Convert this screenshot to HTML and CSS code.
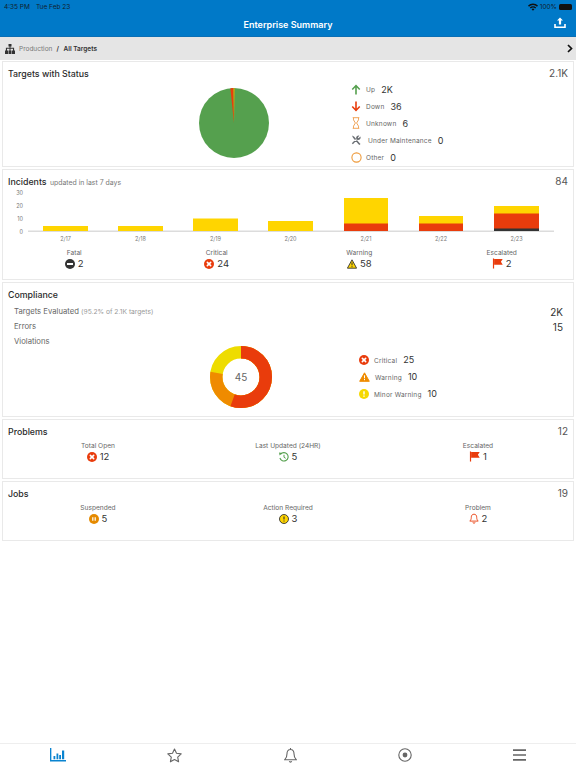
FILE: index.html
```html
<!DOCTYPE html>
<html lang="en">
<head>
    <meta charset="UTF-8">
    <title>Enterprise Summary</title>
    <link rel="stylesheet" href="styles.css">
</head>
<body>
    <svg class="sprites" width="0" height="0">
        <symbol id="i-critical" viewBox="0 0 12 12">
            <circle cx="6" cy="6" r="6" fill="#e93c0c"/>
            <path d="M4 4l4 4M8 4l-4 4" stroke="#fff" stroke-width="1.9" stroke-linecap="round"/>
        </symbol>
        <symbol id="i-flag" viewBox="0 0 12 12">
            <path d="M1 0.5h1.3v11H1z" fill="#e93c0c"/>
            <path d="M2.3 1h9.4l-2 3 2 3.4H2.3z" fill="#e93c0c"/>
        </symbol>
    </svg>

    <header class="app-header">
        <div class="status-bar">
            <span class="status-time">4:35 PM<span class="status-date">Tue Feb 23</span></span>
            <span class="status-right">
                <svg width="10" height="8" viewBox="0 0 10 8"><path d="M0 2.6a7.2 7.2 0 0 1 10 0L9 3.7a5.7 5.7 0 0 0-8 0zM1.8 4.5a4.6 4.6 0 0 1 6.4 0L7.2 5.5a3.2 3.2 0 0 0-4.4 0zM3.6 6.3a2 2 0 0 1 2.8 0L5 7.8z" fill="#111"/></svg>
                100%
                <span class="battery"></span>
            </span>
        </div>
        <div class="title-bar">
            <h1>Enterprise Summary</h1>
            <svg class="upload" width="12" height="12" viewBox="0 0 12 12"><path d="M6 0.5L9 3.6H7.1V7.6H4.9V3.6H3z" fill="#fff"/><path d="M1 7v3.2h10V7" fill="none" stroke="#fff" stroke-width="1.6"/></svg>
        </div>
    </header>

    <nav class="crumbs">
        <svg width="12" height="10" viewBox="0 0 12 10"><path d="M4.5 0h3v2.6h-1v1.2h3.6v2.6H11V10H8V6.4h1V4.8H6.5v1.6h1V10h-3V6.4h1V4.8H3v1.6h1V10H1V6.4h.9V3.8h3.6V2.6h-1z" fill="#333"/></svg>
        <span class="crumb-parent">Production</span>
        <span class="crumb-current">/ <span class="crumb-name">All Targets</span></span>
        <svg class="crumb-arrow" width="6" height="9" viewBox="0 0 6 9"><path d="M1 1l3.5 3.5L1 8" fill="none" stroke="#111" stroke-width="1.7"/></svg>
    </nav>

    <main class="cards">
        <section class="card card-status">
            <div class="card-head">
                <h2>Targets with Status</h2>
                <span class="total">2.1K</span>
            </div>
            <div class="chart-row">
                <div class="pie-wrap">
                    <svg width="70" height="70" viewBox="-35.5 -35.5 71 71">
                        <circle r="35.5" fill="#55a04e"/>
                        <path d="M0 0L-3.7 -35.3A35.5 35.5 0 0 1 -0.6 -35.5z" fill="#e93c0c"/>
                        <path d="M0 0L-0.6 -35.5A35.5 35.5 0 0 1 0.6 -35.5z" fill="#e0a800"/>
                    </svg>
                </div>
                <ul class="legend">
                    <li><span class="legend-icon"><svg width="10" height="11" viewBox="0 0 10 11"><path d="M5 0.5L9.3 5 8.2 6 5.8 3.6V10.5H4.2V3.6L1.8 6 .7 5z" fill="#55a04e"/></svg></span><span class="legend-label">Up</span><b>2K</b></li>
                    <li><span class="legend-icon"><svg width="10" height="11" viewBox="0 0 10 11"><path d="M5 10.5L9.3 6 8.2 5 5.8 7.4V.5H4.2V7.4L1.8 5 .7 6z" fill="#e93c0c"/></svg></span><span class="legend-label">Down</span><b>36</b></li>
                    <li><span class="legend-icon"><svg width="8" height="12" viewBox="0 0 8 12"><path d="M.7.7h6.6M.7 11.3h6.6M1.5.7v2.2L3.4 6 1.5 9.1v2.2M6.5.7v2.2L4.6 6l1.9 3.1v2.2" fill="none" stroke="#f0a55a" stroke-width="1"/></svg></span><span class="legend-label">Unknown</span><b>6</b></li>
                    <li><span class="legend-icon"><svg width="10" height="10" viewBox="0 0 10 10"><path d="M1 0.5l2 1 5.5 6.5 1 1-1.2 1-1-1L2 2.8zM9.3 1.5L7.6 3.2 6.8 2.4 8.4.7A2.4 2.4 0 0 0 5.3 3.8L.8 8.2 1.9 9.3 6.2 4.8A2.4 2.4 0 0 0 9.3 1.5z" fill="#6b6f74"/></svg></span><span class="legend-label legend-wide">Under Maintenance</span><b>0</b></li>
                    <li><span class="legend-icon"><svg width="11" height="11" viewBox="0 0 11 11"><circle cx="5.5" cy="5.5" r="4.6" fill="none" stroke="#ee9a3a" stroke-width="1.1"/></svg></span><span class="legend-label">Other</span><b>0</b></li>
                </ul>
            </div>
        </section>

        <section class="card card-incidents">
            <div class="card-head">
                <h2>Incidents <small>updated in last 7 days</small></h2>
                <span class="total">84</span>
            </div>
            <svg class="bars" width="570" height="56" viewBox="0 0 570 56">
                <g class="axis-y">
                    <text x="20" y="9">30</text>
                    <text x="20" y="22">20</text>
                    <text x="20" y="34.5">10</text>
                    <text x="20" y="47.5">0</text>
                </g>
                <rect x="25" y="44.5" width="526" height="1.5" fill="#dcdcdc"/>
                <g fill="#ffd500">
                    <rect x="40" y="40" width="45" height="5"/>
                    <rect x="115" y="40" width="45" height="5"/>
                    <rect x="190" y="32.5" width="45" height="12.5"/>
                    <rect x="265" y="35" width="45" height="10"/>
                    <rect x="341" y="12" width="44" height="33"/>
                    <rect x="416" y="30" width="44" height="15"/>
                    <rect x="491" y="20" width="45" height="25"/>
                </g>
                <g fill="#e93c0c">
                    <rect x="341" y="37.5" width="44" height="7.5"/>
                    <rect x="416" y="37.5" width="44" height="7.5"/>
                    <rect x="491" y="27.5" width="45" height="17.5"/>
                </g>
                <rect x="491" y="42.5" width="45" height="2.5" fill="#333"/>
                <g class="axis-x">
                    <text x="62.5" y="55">2/17</text>
                    <text x="137.5" y="55">2/18</text>
                    <text x="212.5" y="55">2/19</text>
                    <text x="287.5" y="55">2/20</text>
                    <text x="363" y="55">2/21</text>
                    <text x="438" y="55">2/22</text>
                    <text x="513.5" y="55">2/23</text>
                </g>
            </svg>
            <div class="stats stats-four">
                <div class="stat">
                    <span class="stat-label">Fatal</span>
                    <span class="stat-value"><svg width="10" height="10" viewBox="0 0 10 10"><circle cx="5" cy="5" r="5" fill="#333"/><rect x="2" y="4" width="6" height="2" fill="#fff"/></svg>2</span>
                </div>
                <div class="stat">
                    <span class="stat-label">Critical</span>
                    <span class="stat-value"><svg width="10" height="10"><use href="#i-critical"/></svg>24</span>
                </div>
                <div class="stat">
                    <span class="stat-label">Warning</span>
                    <span class="stat-value"><svg width="10" height="10" viewBox="0 0 10 10"><path d="M5 .8L9.6 9.2H.4z" fill="#ffd500" stroke="#333" stroke-width=".9" stroke-linejoin="round"/><path d="M5 3.4v3M5 7.2v1" stroke="#333" stroke-width="1"/></svg>58</span>
                </div>
                <div class="stat">
                    <span class="stat-label">Escalated</span>
                    <span class="stat-value"><svg width="11" height="11"><use href="#i-flag"/></svg>2</span>
                </div>
            </div>
        </section>

        <section class="card card-compliance">
            <div class="card-head">
                <h2>Compliance</h2>
            </div>
            <div class="metric"><span>Targets Evaluated <small>(95.2% of 2.1K targets)</small></span><b>2K</b></div>
            <div class="metric"><span>Errors</span><b>15</b></div>
            <div class="metric"><span>Violations</span></div>
            <div class="chart-row chart-row-donut">
                <div class="donut-wrap">
                    <svg width="62" height="62" viewBox="0 0 62 62">
                        <g fill="none" stroke-width="12.5" transform="rotate(-90 31 31)">
                            <circle cx="31" cy="31" r="24.75" pathLength="45" stroke="#eedc00"/>
                            <circle cx="31" cy="31" r="24.75" pathLength="45" stroke="#ef8b00" stroke-dasharray="35 45"/>
                            <circle cx="31" cy="31" r="24.75" pathLength="45" stroke="#e93c0c" stroke-dasharray="25 45"/>
                        </g>
                    </svg>
                    <span class="donut-count">45</span>
                </div>
                <ul class="legend legend-compliance">
                    <li><span class="legend-icon"><svg width="10" height="10"><use href="#i-critical"/></svg></span><span class="legend-label">Critical</span><b>25</b></li>
                    <li><span class="legend-icon"><svg width="11" height="10" viewBox="0 0 11 10"><path d="M5.5 .8L10.3 9.3H.7z" fill="#ef8b00" stroke="#ef8b00" stroke-linejoin="round"/><path d="M5.5 3.3v3M5.5 7v1.2" stroke="#fff" stroke-width="1"/></svg></span><span class="legend-label legend-warning">Warning</span><b>10</b></li>
                    <li><span class="legend-icon"><svg width="10" height="10" viewBox="0 0 10 10"><circle cx="5" cy="5" r="5" fill="#f5d800"/><path d="M5 2.2v3.2M5 6.4v1.4" stroke="#fff" stroke-width="1.4"/></svg></span><span class="legend-label">Minor Warning</span><b>10</b></li>
                </ul>
            </div>
        </section>

        <section class="card card-small">
            <div class="card-head">
                <h2>Problems</h2>
                <span class="total">12</span>
            </div>
            <div class="stats stats-three">
                <div class="stat">
                    <span class="stat-label">Total Open</span>
                    <span class="stat-value"><svg width="10" height="10"><use href="#i-critical"/></svg>12</span>
                </div>
                <div class="stat">
                    <span class="stat-label">Last Updated (24HR)</span>
                    <span class="stat-value"><svg width="10" height="10" viewBox="0 0 10 10"><path d="M1.6 2.2A4.2 4.2 0 1 1 .9 6" fill="none" stroke="#55a04e" stroke-width="1.1"/><path d="M0 .4L3.4 .9 .6 3.6z" fill="#55a04e"/><path d="M5 2.8v2.5l1.7 1" fill="none" stroke="#55a04e" stroke-width="1"/></svg>5</span>
                </div>
                <div class="stat">
                    <span class="stat-label">Escalated</span>
                    <span class="stat-value"><svg width="11" height="11"><use href="#i-flag"/></svg>1</span>
                </div>
            </div>
        </section>

        <section class="card card-small">
            <div class="card-head">
                <h2>Jobs</h2>
                <span class="total">19</span>
            </div>
            <div class="stats stats-three">
                <div class="stat">
                    <span class="stat-label">Suspended</span>
                    <span class="stat-value"><svg width="10" height="10" viewBox="0 0 10 10"><circle cx="5" cy="5" r="5" fill="#e58a00"/><path d="M3.8 3.2v3.6M6.2 3.2v3.6" stroke="#fff" stroke-width="1.2"/></svg>5</span>
                </div>
                <div class="stat">
                    <span class="stat-label">Action Required</span>
                    <span class="stat-value"><svg width="10" height="10" viewBox="0 0 10 10"><circle cx="5" cy="5" r="4.5" fill="#ffd500" stroke="#333" stroke-width=".9"/><path d="M5 2.4v3.2M5 6.4v1.2" stroke="#333" stroke-width="1.1"/></svg>3</span>
                </div>
                <div class="stat">
                    <span class="stat-label">Problem</span>
                    <span class="stat-value"><svg width="10" height="11" viewBox="0 0 10 11"><path d="M5 1.2C3 1.2 2.3 2.7 2.3 4.3c0 2-.7 3-1.5 3.8h8.4c-.8-.8-1.5-1.8-1.5-3.8C7.7 2.7 7 1.2 5 1.2zM4 9.3a1 1 0 0 0 2 0" fill="none" stroke="#e93c0c" stroke-width=".9"/></svg>2</span>
                </div>
            </div>
        </section>
    </main>

    <footer class="tab-bar">
        <svg width="16" height="14" viewBox="0 0 16 14"><path d="M.6 0v12.800H16" fill="none" stroke="#0a84d0" stroke-width="1.5"/><path d="M3.5 8h1.8v3.2H3.5zM6.5 5.5h1.8v5.700H6.500zM9.200 7h1.800v4.200H9.200zM12 2.500h2.200v8.700H12z" fill="#0a84d0"/></svg>
        <svg width="15" height="15" viewBox="0 0 15 15"><path d="M7.5 1l2 4.3 4.7.6-3.5 3.2.9 4.7-4.100-2.300-4.100 2.300.9-4.700L.8 5.900l4.700-.6z" fill="none" stroke="#666" stroke-width="1.1" stroke-linejoin="round"/></svg>
        <svg width="13" height="15" viewBox="0 0 13 15"><path d="M6.5 1.5C4 1.5 3 3.400 3 5.800c0 3-1 4.700-2.200 5.900h11.400C11 10.500 10 8.800 10 5.800c0-2.400-1-4.300-3.500-4.300zM5.300 13.300a1.300 1.300 0 0 0 2.400 0M6.500 0v1.500" fill="none" stroke="#666" stroke-width="1.1"/></svg>
        <svg width="14" height="14" viewBox="0 0 14 14"><circle cx="7" cy="7" r="6.2" fill="none" stroke="#666" stroke-width="1.1"/><circle cx="7" cy="7" r="2.4" fill="#666"/></svg>
        <svg width="13" height="12" viewBox="0 0 13 12"><path d="M0 1.200h13M0 6h13M0 10.800h13" stroke="#666" stroke-width="1.7"/></svg>
    </footer>
</body>
</html>
```

FILE: styles.css
```css
* {
    box-sizing: border-box;
}

html,
body {
    height: 100%;
}

body {
    margin: 0;
    display: flex;
    flex-direction: column;
    font-family: Inter, "Liberation Sans", sans-serif;
    color: #333;
    background: #fff;
}

.sprites {
    position: absolute;
}

.app-header {
    height: 37px;
    background: #0079c8;
    border-bottom: 1px solid #0a6fb5;
}

.status-bar {
    height: 12px;
    padding: 2px 4px 0 4px;
    display: flex;
    justify-content: space-between;
    align-items: center;
    font-size: 6.5px;
    color: #10212e;
}

.status-date {
    margin-left: 6px;
}

.status-right {
    display: flex;
    align-items: center;
    gap: 2px;
}

.battery {
    width: 13px;
    height: 6px;
    background: #111;
    border-radius: 1.5px;
}

.title-bar {
    height: 24px;
    display: flex;
    justify-content: center;
    align-items: center;
    position: relative;
}

.title-bar h1 {
    margin: 0;
    font-size: 9px;
    font-weight: 600;
    color: #fff;
}

.upload {
    position: absolute;
    right: 10px;
    top: 5px;
}

.crumbs {
    height: 23px;
    padding: 0 3px 0 4px;
    display: flex;
    align-items: center;
    background: #e5e5e5;
    font-size: 6.5px;
}

.crumb-parent {
    margin-left: 3px;
    color: #777;
}

.crumb-current {
    margin-left: 4px;
    font-weight: 600;
    color: #333;
}

.crumb-name {
    margin-left: 3px;
}

.crumb-arrow {
    margin-left: auto;
}

.cards {
    flex: 1;
    padding: 1px 2px 0;
    display: flex;
    flex-direction: column;
    gap: 2px;
}

.card {
    border: 1px solid #e9e9e9;
    padding: 5px 5px 0;
}

.card-status {
    height: 106px;
}

.card-incidents {
    height: 111px;
}

.card-compliance {
    height: 135px;
}

.card-small {
    height: 60px;
}

.card-head {
    display: flex;
    justify-content: space-between;
    align-items: center;
    height: 12px;
}

.card-head h2 {
    margin: 0;
    font-size: 8.8px;
    font-weight: 500;
    color: #2a2a2a;
}

.card-head small {
    font-size: 6.9px;
    font-weight: 400;
    color: #777;
    margin-left: 1px;
}

.card-compliance .card-head {
    margin-bottom: 4px;
}

.total {
    font-size: 10px;
    color: #555;
}

.chart-row {
    display: flex;
    align-items: flex-start;
}

.pie-wrap {
    width: 342px;
    padding: 9px 0 0 191px;
}

.pie-wrap svg {
    display: block;
}

.legend {
    list-style: none;
    margin: 1.5px 0 0;
    padding: 0;
}

.legend li {
    height: 17px;
    display: flex;
    align-items: center;
}

.legend-icon {
    width: 12px;
    display: flex;
    justify-content: center;
}

.legend-label {
    margin: 2px 0 0 4px;
    font-size: 6.5px;
    color: #666;
    letter-spacing: 0.2px;
}

.legend-wide {
    margin-left: 6px;
}

.legend b {
    margin-left: 6px;
    font-size: 9px;
    font-weight: 400;
    color: #333;
}

.bars {
    display: block;
    margin: -1px 0 0 -5px;
}

.bars text {
    font-family: Inter, "Liberation Sans", sans-serif;
    font-size: 5.5px;
    fill: #777;
}

.axis-y text {
    text-anchor: end;
}

.axis-x text {
    text-anchor: middle;
}

.stats {
    display: grid;
    margin: 0 -5px;
}

.stats-four {
    grid-template-columns: repeat(4, 1fr);
    margin-top: 7px;
}

.stats-three {
    grid-template-columns: repeat(3, 1fr);
    margin-top: 5px;
}

.stat {
    display: flex;
    flex-direction: column;
    align-items: center;
}

.stat-label {
    font-size: 6.6px;
    line-height: 9px;
    color: #666;
}

.stat-value {
    display: flex;
    align-items: center;
    gap: 3px;
    font-size: 9.5px;
    line-height: 11px;
    color: #333;
}

.metric {
    height: 15px;
    padding: 0 5px 0 6px;
    display: flex;
    justify-content: space-between;
    align-items: center;
    font-size: 7.7px;
    color: #666;
}

.metric small {
    font-size: 6.7px;
    color: #999;
}

.metric b {
    font-size: 10px;
    font-weight: 400;
    color: #333;
}

.chart-row-donut {
    margin-top: -3px;
}

.donut-wrap {
    width: 350px;
    padding-left: 202px;
    position: relative;
}

.donut-wrap svg {
    display: block;
}

.donut-count {
    position: absolute;
    left: 202px;
    top: 0;
    width: 62px;
    line-height: 62px;
    text-align: center;
    font-size: 10px;
    color: #666;
}

.legend-compliance {
    margin-top: 5px;
}

.legend-warning {
    margin-left: 5px;
}

.tab-bar {
    height: 25px;
    border-top: 1px solid #eee;
    padding: 0 50px 2px;
    display: flex;
    justify-content: space-between;
    align-items: center;
}
```
